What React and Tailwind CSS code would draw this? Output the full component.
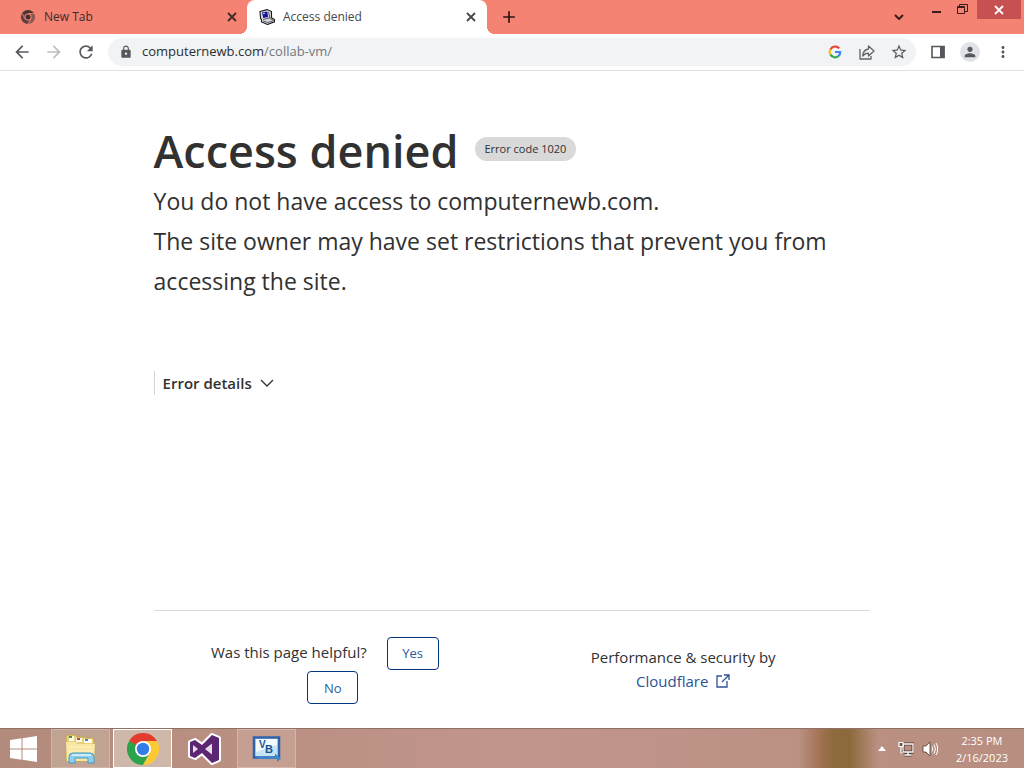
import React from 'react';
import { MdArrowBack, MdArrowForward, MdRefresh, MdLock, MdStarBorder, MdPerson, MdMoreVert, MdAdd } from 'react-icons/md';

const ChromeMono = () => (
  <svg viewBox="0 0 16 16" className="h-4 w-4">
    <path d="M8 8 1.900 4.500a7 7 0 0 1 12.200 0z" fill="#4a3533" />
    <path d="M8 8 1.900 4.500A7 7 0 0 0 8 15l3-5z" fill="#5f423f" />
    <path d="M8 8l3 2-3 5a7 7 0 0 0 6.100-10.500H8z" fill="#8a5a54" />
    <path d="M8 4.500h6.200M5 9.700 1.900 4.500M11 9.700 8 15" stroke="#f58373" strokeWidth=".8" />
    <circle cx="8" cy="8" r="3.500" fill="#f58373" />
    <circle cx="8" cy="8" r="2.500" fill="#43302e" />
  </svg>
);

const ComputerIcon = () => (
  <svg viewBox="0 0 16 16" className="h-4 w-4">
    <path d="M1 2.500 8 .6l4.500 2v6l3 1.900v2.300L8.500 15.500 2.500 13v-2L1.500 9z" fill="#d9dade" stroke="#17171f" strokeWidth="1.100" />
    <path d="m3 3.600 5.200-1 1 5.400-5 .9z" fill="#16169c" />
    <path d="m9.500 3 1.500 6M4 10.500l6-1.500 4 2M4 12l5 1.500 5.500-2" fill="none" stroke="#4b4b55" strokeWidth=".9" />
    <path d="m4.200 4.700 1.600-.3" stroke="#fff" />
  </svg>
);

const CloseIcon = () => (
  <svg viewBox="0 0 14 14" className="h-[14px] w-[14px]" fill="none" stroke="currentColor" strokeWidth="1.800">
    <path d="m3 3 8 8M11 3l-8 8" />
  </svg>
);

const GoogleIcon = () => (
  <svg viewBox="0 0 14 14" className="h-[14px] w-[14px]" fill="none" strokeWidth="2.200">
    <path d="M11.200 3.400A5.200 5.200 0 0 0 2.500 4.400" stroke="#ea4335" />
    <path d="M2.500 4.400a5.200 5.200 0 0 0 0 5.200" stroke="#fbbc05" />
    <path d="M2.500 9.600a5.200 5.200 0 0 0 7.900 1.500" stroke="#34a853" />
    <path d="M10.400 11.100A5.200 5.200 0 0 0 12.200 7H7" stroke="#4285f4" />
  </svg>
);

const ShareIcon = () => (
  <svg viewBox="0 0 18 18" className="h-[18px] w-[18px]" fill="none" stroke="#5f6368" strokeWidth="1.300" strokeLinejoin="round">
    <path d="M2 6v10h11v-3" />
    <path d="M10.500 3v3C7 6.500 5 8.700 4.700 13c1.500-2 3.300-2.900 5.800-2.900V13L16 8z" />
  </svg>
);

const SidePanelIcon = () => (
  <svg viewBox="0 0 16 16" className="h-4 w-4">
    <path d="M2 2.500h12v11H2z" fill="#fff" stroke="#54575b" strokeWidth="1.600" />
    <path d="M10 2h4.500v12H10z" fill="#54575b" />
  </svg>
);

const RestoreIcon = () => (
  <svg viewBox="0 0 11 10" className="h-[10px] w-[11px]" fill="none" stroke="#3a1c18">
    <path d="M.5 2.500h7v7h-7zM.5 3.500h7M2.500 2V.500h8v7H8" />
  </svg>
);

const WindowsLogo = () => (
  <svg viewBox="0 0 28 26" className="h-[26px] w-7" fill="#fff">
    <path d="M0 4 11.500 2.300V12.500H0zM12.500 2.200 27 0v12.500H12.500zM0 13.500h11.500v10.200L0 22zM12.500 13.500H27V26l-14.500-2.200z" />
  </svg>
);

const FolderIcon = () => (
  <svg viewBox="0 0 34 30" className="h-[30px] w-[34px]">
    <path d="M2 3q0-2 2-2h7l2 2h8l1 1h6q2 0 2 2v21H2z" fill="#e9ce79" stroke="#c5a656" />
    <path d="M5 2h5v5H5zM12 4h6v4h-6zM20 5h8v4h-8z" fill="#fffbea" />
    <path d="M5 2h3v2H5z" fill="#3d9650" />
    <path d="M13 4h3v2h-3z" fill="#b94a37" />
    <path d="M21 5h3v2h-3z" fill="#4a86b7" />
    <path d="M2 8h9l2 2h18l-1 17H3z" fill="#f8e6a2" />
    <path d="M4 13h25M4 17h25" stroke="#fff3c4" />
    <path d="M5 29V23q0-4 4-4h17q4 0 4 4v6h-6v-5H11v5z" fill="#8fcfee" stroke="#3f9bcb" />
    <path d="M8 21h19" stroke="#e2f6ff" strokeWidth="1.500" />
  </svg>
);

const ChromeLogo = () => (
  <svg viewBox="0 0 32 32" className="h-8 w-8">
    <path d="M16 16 2.140 8A16 16 0 0 1 29.860 8z" fill="#e33b2e" />
    <path d="M2.140 8A16 16 0 0 0 16 32l6.930-12L16 16z" fill="#2ba24c" />
    <path d="M29.860 8A16 16 0 0 1 16 32l6.930-12L16 8z" fill="#fcc934" />
    <path d="M2.140 8 9.070 20 16 16z" fill="#2ba24c" />
    <circle cx="16" cy="16" r="8" fill="#fff" />
    <circle cx="16" cy="16" r="6.200" fill="#327de8" />
  </svg>
);

const VisualStudioLogo = () => (
  <svg viewBox="0 0 34 32" className="h-8 w-[34px]">
    <path d="M24 2 31 5v22l-7 3-10-10-7 5-5-2V9l5-2 7 5z" fill="#5c2672" stroke="#fff" strokeWidth="4" strokeLinejoin="round" />
    <path d="M24 2 31 5v22l-7 3-10-10-7 5-5-2V9l5-2 7 5z" fill="#5c2672" />
    <path d="M24 10.500v11L17 16zM5 12l5 4-5 4z" fill="#e9dcea" />
  </svg>
);

const VisualBasicLogo = () => (
  <svg viewBox="0 0 30 28" className="h-7 w-[30px]">
    <path d="M2 2.500h25v20H2z" fill="#c6e3f8" stroke="#2e63a8" strokeWidth="2.500" />
    <path d="M4 4h21v6L4 17z" fill="#f2faff" />
    <path d="M5 21.500h18v-3l6 5-4 3.500v-3H5z" fill="#3d84cc" />
    <text x="7" y="13" fontSize="10" fontWeight="700" fill="#18548e" fontFamily="Liberation Sans, sans-serif">V</text>
    <text x="13" y="18" fontSize="11" fontWeight="700" fill="#18548e" fontFamily="Liberation Sans, sans-serif">B</text>
  </svg>
);

const NetworkIcon = () => (
  <svg viewBox="0 0 16 16" className="h-4 w-4">
    <path d="M5 3h10v8H5zM10 11v3M6.500 14h7" fill="none" stroke="#4f3b36" strokeWidth="3" />
    <path d="M5 3h10v8H5zM10 11v3M6.500 14h7" fill="none" stroke="#fff" strokeWidth="1.300" />
    <path d="M1 1.500h4v4H1zM3 5.500V12h2" fill="#6b5049" stroke="#fff" strokeWidth="1.200" />
  </svg>
);

const SpeakerIcon = () => (
  <svg viewBox="0 0 16 16" className="h-4 w-4">
    <path d="M1 5h3l4-4v14l-4-4H1z" fill="#fff" stroke="#4f3b36" strokeWidth=".8" />
    <path d="M10 5.500q1.500 2.500 0 5M12 3.500q3 4.500 0 9M14 2q3.500 6 0 12" fill="none" stroke="#fff" />
  </svg>
);

const taskbarApps = [
  { name: 'File Explorer', icon: <FolderIcon />, style: 'border-[#cdb5a8] bg-[#c0a392]' },
  { name: 'Google Chrome', icon: <ChromeLogo />, style: 'border-white bg-[#cdb8aa]' },
  { name: 'Visual Studio', icon: <VisualStudioLogo />, style: 'border-transparent' },
  { name: 'Visual Basic', icon: <VisualBasicLogo />, style: 'border-[#d6b6aa] bg-[#c49f92]' },
];

const TabStrip = () => (
  <div className="flex h-[34px] bg-[#f58373] text-xs text-[#3c2b29]">
    <div className="flex w-[247px] items-center pl-5 pr-2">
      <ChromeMono />
      <span className="ml-2 flex-1">New Tab</span>
      <button aria-label="Close New Tab"><CloseIcon /></button>
    </div>
    <div className="relative flex w-60 items-center rounded-t-lg bg-white pl-3 pr-[9px] text-[#45474a]">
      <span className="absolute -left-2 bottom-0 h-2 w-2 bg-[radial-gradient(circle_at_0_0,#f58373_8px,#fff_8px)]" />
      <ComputerIcon />
      <span className="ml-2 flex-1">Access denied</span>
      <button aria-label="Close Access denied"><CloseIcon /></button>
      <span className="absolute -right-2 bottom-0 h-2 w-2 bg-[radial-gradient(circle_at_100%_0,#f58373_8px,#fff_8px)]" />
    </div>
    <button aria-label="New tab" className="ml-3 text-[#2b1512]"><MdAdd className="h-5 w-5" /></button>
    <div className="ml-auto flex items-start text-[#3a1c18]">
      <button aria-label="Search tabs" className="mr-7 mt-[14px]">
        <svg viewBox="0 0 10 6" className="h-[6px] w-[10px]" fill="none" stroke="currentColor" strokeWidth="2">
          <path d="m1 1 4 4 4-4" />
        </svg>
      </button>
      <button aria-label="Minimize" className="mr-4 mt-[11px] h-[2px] w-[9px] bg-[#3a1c18]" />
      <button aria-label="Restore" className="mr-[9px] mt-1"><RestoreIcon /></button>
      <button aria-label="Close window" className="mr-[3px] flex h-[19px] w-11 items-center justify-center bg-[#c75050] text-white">
        <CloseIcon />
      </button>
    </div>
  </div>
);

const Toolbar = () => (
  <div className="flex h-[37px] items-center border-b border-[#dfe1e3] bg-white px-3 text-[#55585c]">
    <button aria-label="Back"><MdArrowBack className="h-5 w-5" /></button>
    <button aria-label="Forward" className="ml-3 text-[#bcbec0]"><MdArrowForward className="h-5 w-5" /></button>
    <button aria-label="Reload" className="ml-3"><MdRefresh className="h-5 w-5" /></button>
    <div className="ml-3 mr-[14px] flex h-7 flex-1 items-center rounded-full bg-[#f1f3f4] pl-[11px] pr-2">
      <MdLock className="h-[14px] w-[14px]" />
      <div className="ml-[9px] flex-1 text-[13px]">
        <a href="#address" className="text-[#2c2e31]">computernewb.com<span className="text-[#74777b]">/collab-vm/</span></a>
      </div>
      <button aria-label="Search with Google" className="mr-4"><GoogleIcon /></button>
      <button aria-label="Share" className="mr-[14px]"><ShareIcon /></button>
      <button aria-label="Bookmark"><MdStarBorder className="h-[18px] w-[18px]" /></button>
    </div>
    <button aria-label="Side panel"><SidePanelIcon /></button>
    <button aria-label="Profile" className="ml-[14px] flex h-5 w-5 items-center justify-center rounded-full bg-[#dfe2e6]">
      <MdPerson className="h-4 w-4" />
    </button>
    <button aria-label="Menu" className="ml-[14px]"><MdMoreVert className="h-[18px] w-[18px]" /></button>
  </div>
);

const ErrorPage = () => (
  <main className="mx-auto flex w-[70%] flex-1 flex-col text-[#313131]">
    <h1 className="mt-[50px] flex items-start text-[45px] leading-[60px] font-semibold">
      Access denied
      <span className="mt-4 ml-4 rounded-full bg-[#d9d9d9] px-[10px] text-[11px] leading-6 font-normal">Error code 1020</span>
    </h1>
    <p className="text-[23px] leading-10">
      You do not have access to computernewb.com.<br />
      The site owner may have set restrictions that prevent you from accessing the site.
    </p>
    <button className="mt-[70px] flex items-center self-start border-l border-[#d5d5d5] pl-2 text-[15px] leading-6 font-semibold">
      Error details
      <svg viewBox="0 0 14 8" className="ml-2 h-2 w-[14px]" fill="none" stroke="#313131" strokeWidth="1.300">
        <path d="m1 1 6 6 6-6" />
      </svg>
    </button>
    <div className="mt-auto flex border-t border-[#d9d9d9] pt-6 pb-6 text-center text-[15px]">
      <div className="w-1/2 pr-12 pl-8 leading-[34px]">
        <span>Was this page helpful?</span>{' '}
        <button className="ml-4 h-[33px] w-[52px] rounded border border-[#003681] text-[13px] leading-5 text-[#2c5c9c]">Yes</button>{' '}
        <button className="ml-4 h-[33px] w-[51px] rounded border border-[#003681] text-[13px] leading-5 text-[#2c5c9c]">No</button>
      </div>
      <div className="w-1/2 pt-[10px] pr-4 leading-6">
        <div>Performance &amp; security by</div>
        <a href="#cloudflare" className="inline-flex items-center text-[#2c5394]">
          Cloudflare
          <svg viewBox="0 0 14 14" className="ml-2 h-[14px] w-[14px]" fill="none" stroke="#2c5394" strokeWidth="1.300">
            <path d="M6 2H1v11h10V7M8 1h5v5M13 1 6 8" />
          </svg>
        </a>
      </div>
    </div>
  </main>
);

const Taskbar = () => (
  <footer className="flex h-10 items-center border-t border-[#8f7066] bg-linear-to-r from-[#b28b7c] via-[#c2958a] to-[#b78e80]">
    <button aria-label="Start" className="ml-[10px] mr-[13px]"><WindowsLogo /></button>
    <div className="flex gap-[3px]">
      {taskbarApps.map((app) => (
        <button key={app.name} aria-label={app.name} className={`flex h-[39px] w-[59px] items-center justify-center border ${app.style}`}>
          {app.icon}
        </button>
      ))}
    </div>
    <div className="ml-auto h-full w-20 bg-[linear-gradient(to_right,#a06a5000,#a0704f_30%,#8c6a3c_45%,#8c6a3c_65%,#8c6a3c00)]" />
    <div className="flex items-center gap-2 pr-4 text-white">
      <button aria-label="Show hidden icons" className="mr-1">
        <svg viewBox="0 0 8 5" className="h-[5px] w-2" fill="#fff"><path d="M0 5 4 0l4 5z" /></svg>
      </button>
      <button aria-label="Network"><NetworkIcon /></button>
      <button aria-label="Volume"><SpeakerIcon /></button>
      <div className="ml-[10px] text-center text-[11px] leading-[17px]">
        <div>2:35 PM</div>
        <div>2/16/2023</div>
      </div>
    </div>
  </footer>
);

export default function App() {
  return (
    <div className="flex min-h-screen flex-col bg-white font-['Open_Sans','Noto_Sans',sans-serif]">
      <TabStrip />
      <Toolbar />
      <ErrorPage />
      <Taskbar />
    </div>
  );
}
